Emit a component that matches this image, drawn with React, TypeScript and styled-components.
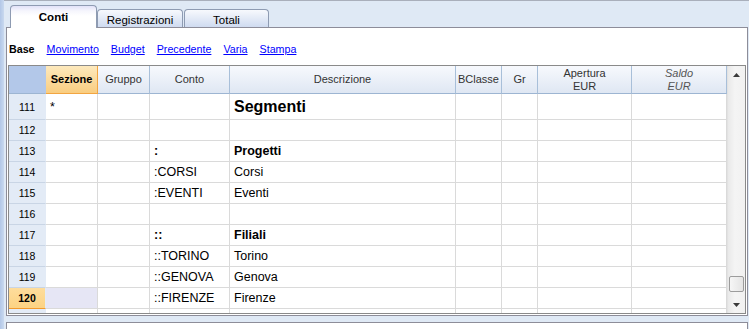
import React from 'react';
import styled, { createGlobalStyle } from 'styled-components';

const GlobalStyle = createGlobalStyle`
  html, body { margin: 0; padding: 0; }
  body {
    background: #dfe9f5;
    font-family: "Liberation Sans", Arial, sans-serif;
    color: #000;
  }
`;

const COLS = '37px 52px 52px 80px 226px 46px 36px 94px 95px';

const Root = styled.div`
  display: flex;
  width: 749px;
  height: 329px;
  overflow: hidden;
  background: #dfe9f5;
`;

const LeftStrip = styled.div`
  width: 4px;
  flex: none;
  background: linear-gradient(to right, #b2c7e7, #c9d9ef);
`;

const Main = styled.div`
  flex: 1;
  min-width: 0;
  display: flex;
  flex-direction: column;
`;

const TabBar = styled.div`
  height: 27px;
  box-sizing: border-box;
  border-top: 1px solid #a9afbb;
  display: flex;
  align-items: flex-end;
  padding-left: 6px;
`;

const Tab = styled.div<{ $active?: boolean; $w: number; $gap?: number }>`
  position: relative;
  z-index: 1;
  box-sizing: border-box;
  width: ${(p) => p.$w}px;
  height: ${(p) => (p.$active ? 23 : 18)}px;
  margin-bottom: ${(p) => (p.$active ? -1 : 0)}px;
  margin-right: ${(p) => p.$gap ?? 0}px;
  padding-top: ${(p) => (p.$active ? 0 : 2)}px;
  border: 1px solid #8e9bb2;
  border-bottom: none;
  border-radius: 4px 4px 0 0;
  background: ${(p) =>
    p.$active
      ? 'linear-gradient(#e2e2f8 0px, #f6f6fd 5px, #ffffff 10px)'
      : 'linear-gradient(#f7f9fd, #cfdbf0)'};
  font-size: 11.5px;
  font-weight: ${(p) => (p.$active ? 700 : 400)};
  display: flex;
  align-items: center;
  justify-content: center;
`;

const Panel = styled.div`
  margin-left: 2px;
  width: 742px;
  height: 289px;
  flex: none;
  box-sizing: border-box;
  border: 1px solid #8d8d99;
  background: #fff;
  display: flex;
  flex-direction: column;
`;

const ViewBar = styled.div`
  height: 37px;
  flex: none;
  box-sizing: border-box;
  padding: 15px 0 0 2px;
  display: flex;
  gap: 12px;
  font-size: 10.7px;
  line-height: 13px;
`;

const ViewCurrent = styled.span`
  font-weight: 700;
`;

const ViewLink = styled.a`
  color: #0000ff;
  text-decoration: underline;
  cursor: pointer;
`;

const TableFrame = styled.div`
  margin: 0 1px 1px 1px;
  height: 249px;
  flex: none;
  box-sizing: border-box;
  border: 1px solid #8a8a8a;
  display: flex;
  overflow: hidden;
`;

const Grid = styled.div`
  width: 718px;
  flex: none;
  display: flex;
  flex-direction: column;
  overflow: hidden;
`;

const HeaderRow = styled.div`
  display: grid;
  grid-template-columns: ${COLS};
  height: 28px;
  flex: none;
`;

type HeadKind = 'corner' | 'active' | 'normal';

const HeadCell = styled.div<{ $kind?: HeadKind; $italic?: boolean }>`
  box-sizing: border-box;
  display: flex;
  flex-direction: column;
  align-items: center;
  justify-content: center;
  font-size: 11px;
  line-height: 13px;
  text-align: center;
  color: ${(p) => (p.$italic ? '#555' : p.$kind === 'active' ? '#000' : '#333')};
  font-style: ${(p) => (p.$italic ? 'italic' : 'normal')};
  font-weight: ${(p) => (p.$kind === 'active' ? 700 : 400)};
  border-right: 1px solid
    ${(p) => (p.$kind === 'active' ? '#f2a541' : p.$kind === 'corner' ? '#b3c8e9' : '#a8bfd9')};
  border-bottom: 1px solid ${(p) => (p.$kind === 'active' ? '#f2a541' : '#9db5d2')};
  background: ${(p) =>
    p.$kind === 'corner'
      ? '#b3c8e9'
      : p.$kind === 'active'
      ? 'linear-gradient(#fde9bd, #f9cd80)'
      : 'linear-gradient(#f7f9fd, #dfe7f3)'};
`;

const DataRow = styled.div<{ $h: number }>`
  display: grid;
  grid-template-columns: ${COLS};
  height: ${(p) => p.$h}px;
  flex: none;
`;

const RowNum = styled.div<{ $current?: boolean }>`
  box-sizing: border-box;
  display: flex;
  align-items: center;
  justify-content: center;
  font-size: 10.5px;
  font-weight: ${(p) => (p.$current ? 700 : 400)};
  color: #000;
  background: ${(p) => (p.$current ? 'linear-gradient(#fedd9c, #fcd383)' : '#e3ebf6')};
  border-bottom: 1px solid ${(p) => (p.$current ? '#f39a2c' : '#c9d5e5')};
  border-right: 1px solid #e3ebf6;
`;

const Cell = styled.div<{ $bold?: boolean; $size?: number; $selected?: boolean }>`
  box-sizing: border-box;
  display: flex;
  align-items: center;
  padding-left: 4px;
  white-space: nowrap;
  overflow: hidden;
  font-size: ${(p) => p.$size ?? 12.5}px;
  font-weight: ${(p) => (p.$bold ? 700 : 400)};
  background: ${(p) => (p.$selected ? '#e6e6f5' : '#fff')};
  border-right: 1px solid #dadada;
  border-bottom: 1px solid #dadada;
`;

const Scrollbar = styled.div`
  width: 18px;
  flex: none;
  box-sizing: border-box;
  display: flex;
  flex-direction: column;
  background: linear-gradient(to right, #e9e9e9, #f4f4f4 40%, #f1f1f1);
  border-left: 1px solid #e2e2e2;
`;

const ArrowButton = styled.div`
  height: 17px;
  flex: none;
  display: flex;
  align-items: center;
  justify-content: center;
`;

const Track = styled.div`
  flex: 1;
`;

const Thumb = styled.div`
  height: 16px;
  flex: none;
  margin: 0 1px 4px 1px;
  box-sizing: border-box;
  border: 1px solid #9c9c9c;
  border-radius: 2px;
  background: linear-gradient(to right, #f6f6f6, #e4e4e4);
`;

const BottomGap = styled.div`
  height: 6px;
  flex: none;
`;

const BottomPanel = styled.div`
  margin-left: 2px;
  width: 742px;
  flex: 1;
  box-sizing: border-box;
  border: 1px solid #8d8d99;
  border-bottom: none;
  background: #fff;
`;

const Arrow = ({ dir }: { dir: 'up' | 'down' }) => (
  <svg width="7" height="4" viewBox="0 0 7 4">
    {dir === 'up' ? (
      <polygon points="3.5,0 7,4 0,4" fill="#3a3a3a" />
    ) : (
      <polygon points="0,0 7,0 3.5,4" fill="#3a3a3a" />
    )}
  </svg>
);

type Row = {
  n: number;
  h?: number;
  sez?: string;
  conto?: string;
  desc?: string;
  bold?: boolean;
  big?: boolean;
  current?: boolean;
};

const rows: Row[] = [
  { n: 111, h: 26, sez: '*', desc: 'Segmenti', big: true },
  { n: 112 },
  { n: 113, conto: ':', desc: 'Progetti', bold: true },
  { n: 114, conto: ':CORSI', desc: 'Corsi' },
  { n: 115, conto: ':EVENTI', desc: 'Eventi' },
  { n: 116 },
  { n: 117, conto: '::', desc: 'Filiali', bold: true },
  { n: 118, conto: '::TORINO', desc: 'Torino' },
  { n: 119, conto: '::GENOVA', desc: 'Genova' },
  { n: 120, conto: '::FIRENZE', desc: 'Firenze', current: true },
  { n: 121 },
];

export default function App() {
  return (
    <>
      <GlobalStyle />
      <Root>
        <LeftStrip />
        <Main>
          <TabBar>
            <Tab $active $w={87}>Conti</Tab>
            <Tab $w={86} $gap={1}>Registrazioni</Tab>
            <Tab $w={85}>Totali</Tab>
          </TabBar>
          <Panel>
            <ViewBar>
              <ViewCurrent>Base</ViewCurrent>
              <ViewLink>Movimento</ViewLink>
              <ViewLink>Budget</ViewLink>
              <ViewLink>Precedente</ViewLink>
              <ViewLink>Varia</ViewLink>
              <ViewLink>Stampa</ViewLink>
            </ViewBar>
            <TableFrame>
              <Grid>
                <HeaderRow>
                  <HeadCell $kind="corner" />
                  <HeadCell $kind="active">Sezione</HeadCell>
                  <HeadCell>Gruppo</HeadCell>
                  <HeadCell>Conto</HeadCell>
                  <HeadCell>Descrizione</HeadCell>
                  <HeadCell>BClasse</HeadCell>
                  <HeadCell>Gr</HeadCell>
                  <HeadCell>
                    <span>Apertura</span>
                    <span>EUR</span>
                  </HeadCell>
                  <HeadCell $italic>
                    <span>Saldo</span>
                    <span>EUR</span>
                  </HeadCell>
                </HeaderRow>
                {rows.map((r) => (
                  <DataRow key={r.n} $h={r.h ?? 21}>
                    <RowNum $current={r.current}>{r.n === 121 ? '' : r.n}</RowNum>
                    <Cell $selected={r.current}>{r.sez}</Cell>
                    <Cell />
                    <Cell $bold={r.bold}>{r.conto}</Cell>
                    <Cell $bold={r.bold || r.big} $size={r.big ? 16 : undefined}>
                      {r.desc}
                    </Cell>
                    <Cell />
                    <Cell />
                    <Cell />
                    <Cell />
                  </DataRow>
                ))}
              </Grid>
              <Scrollbar>
                <ArrowButton>
                  <Arrow dir="up" />
                </ArrowButton>
                <Track />
                <Thumb />
                <ArrowButton>
                  <Arrow dir="down" />
                </ArrowButton>
              </Scrollbar>
            </TableFrame>
          </Panel>
          <BottomGap />
          <BottomPanel />
        </Main>
      </Root>
    </>
  );
}
